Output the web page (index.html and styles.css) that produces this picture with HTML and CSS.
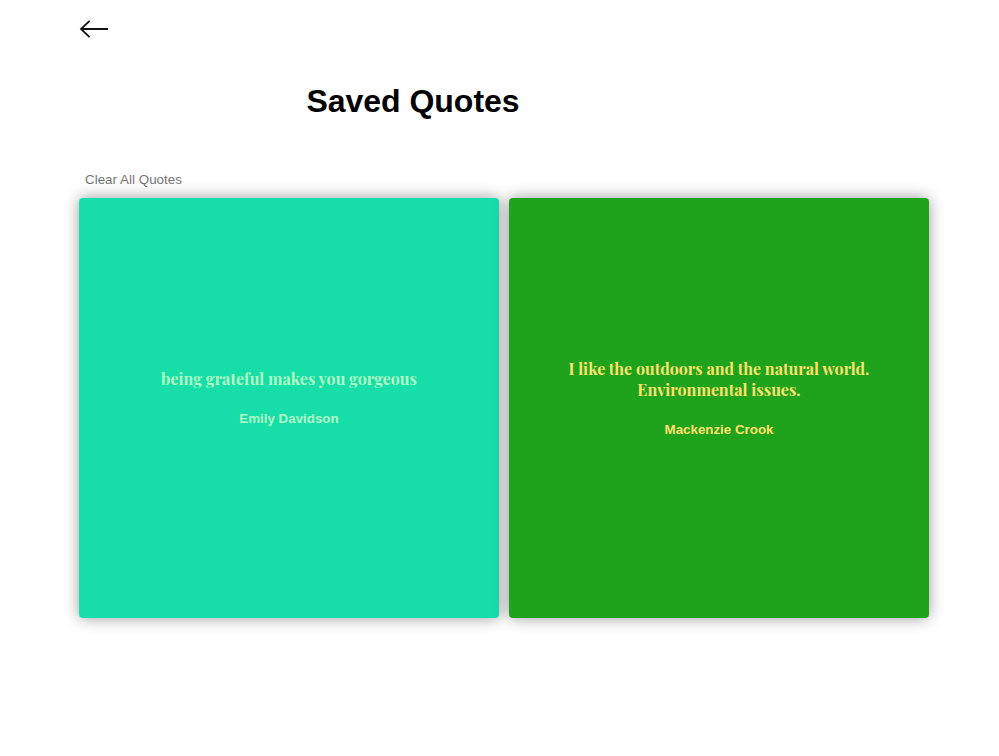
FILE: index.html
```html
<!DOCTYPE html>
<html lang="en">
<head>
<meta charset="utf-8">
<title>Saved Quotes</title>
<link rel="stylesheet" href="styles.css">
</head>
<body>
<a class="back" href="#" aria-label="Back"><svg width="30" height="20" viewBox="0 0 30 20"><path d="M10.6 1.9 2 10l8.6 8.1M2 10h27"/></svg></a>
<h1 class="title">Saved Quotes</h1>
<button class="clear">Clear All Quotes</button>
<main class="quotes">
<article class="card mint"><p class="quote"><span class="line">being grateful makes you gorgeous</span></p><p class="author">Emily Davidson</p></article>
<article class="card green"><p class="quote"><span class="line">I like the outdoors and the natural world.</span><span class="line">Environmental issues.</span></p><p class="author">Mackenzie Crook</p></article>
</main>
</body>
</html>
```
FILE: styles.css
```css
* { box-sizing: border-box; }
body { margin: 0; padding: 19px 70px 0 79px; min-height: 756px; background: #fff; font-family: "Liberation Sans", Arial, sans-serif; }
.back { display: block; width: 30px; height: 20px; }
.back svg { display: block; fill: none; stroke: #111; stroke-width: 1.8; }
.title { margin: 44px 0 0 227.5px; font-size: 32px; line-height: 37px; letter-spacing: -.03px; white-space: nowrap; }
.clear { display: block; margin: 51px 0 0; padding: 0 6px; height: 17px; border: 0; background: none; color: #757575; font: 13.333px/17px "Liberation Sans", Arial, sans-serif; letter-spacing: .04px; white-space: nowrap; }
.quotes { display: flex; gap: 10px; margin-top: 10px; }
.card { width: 420px; height: 420px; padding-bottom: 21px; border-radius: 4px; box-shadow: 0 0 15px rgba(0,0,0,.4); display: flex; flex-direction: column; align-items: center; justify-content: center; }
.mint { background: #17dda8; color: #b0fcc5; }
.green { background: #20a31c; color: #fbe26c; }
.quote { margin: 0; font: 700 16px/21px "Playfair Display", "Liberation Serif", serif; text-align: center; }
.line { display: block; white-space: nowrap; }
.author { margin: 22px 0 0; font-size: 13.333px; line-height: 16px; font-weight: 700; }
```
